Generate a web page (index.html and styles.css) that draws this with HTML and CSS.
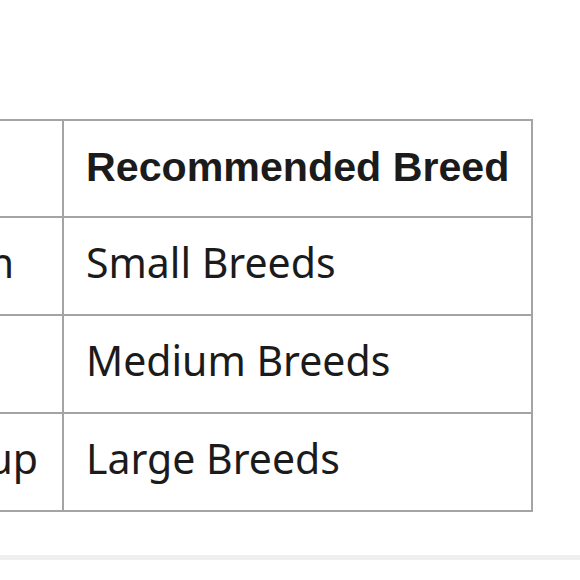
FILE: index.html
```html
<!DOCTYPE html>
<html lang="en">
<head>
<meta charset="utf-8">
<title>Breed table</title>
<link rel="stylesheet" href="styles.css">
</head>
<body>
<div class="wrap">
  <table class="breeds">
    <thead>
      <tr><th>Time</th><th class="col2">Recommended Breed</th></tr>
    </thead>
    <tbody>
      <tr><td>Up to 30 min</td><td class="col2">Small Breeds</td></tr>
      <tr><td>30 to 60</td><td class="col2">Medium Breeds</td></tr>
      <tr><td>1 hour and up</td><td class="col2">Large Breeds</td></tr>
    </tbody>
  </table>
</div>
<div class="band"></div>
</body>
</html>
```
FILE: styles.css
```css
html, body {
  margin: 0;
  background: #ffffff;
}
.wrap {
  display: flex;
  justify-content: flex-end;
  overflow: hidden;
  margin-right: 47px;
  padding-top: 119px;
}
.breeds {
  flex: none;
  border-collapse: collapse;
  color: #1b1b1b;
}
.breeds th,
.breeds td {
  border: 2px solid #a4a4a4;
  padding: 20px 24px 28px 24px;
  line-height: 48px;
  text-align: left;
  white-space: nowrap;
  vertical-align: top;
}
.breeds th {
  font-family: "Liberation Sans", Arial, sans-serif;
  font-size: 41.2px;
  font-weight: 700;
  padding-top: 22px;
  padding-bottom: 25px;
}
.breeds td {
  font-family: "Noto Sans", "Open Sans", sans-serif;
  font-size: 41px;
  font-weight: 400;
}
.breeds .col2 {
  width: 419px;
  padding-left: 22px;
  padding-right: 26px;
}
.breeds th.col2 {
  padding-right: 20px;
}
.band {
  margin-top: 43px;
  height: 5px;
  background: #efefef;
}
```
